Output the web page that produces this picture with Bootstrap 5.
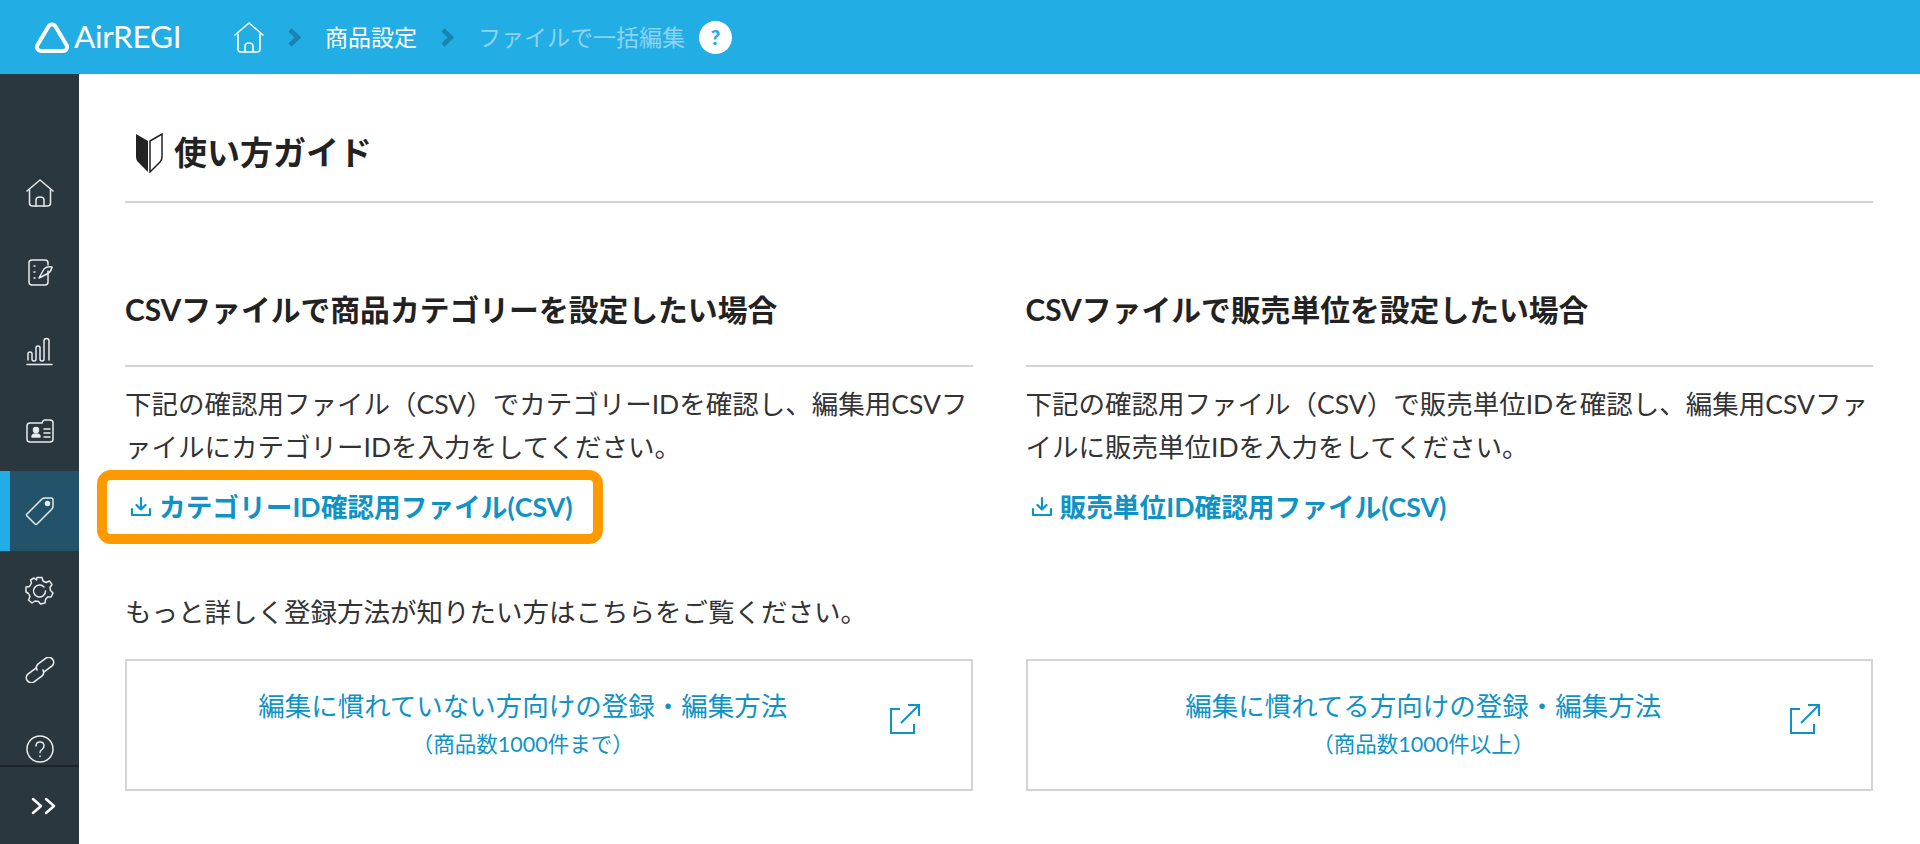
<!DOCTYPE html>
<html lang="ja">
<head>
    <meta charset="UTF-8">
    <meta name="viewport" content="width=device-width, initial-scale=1.0">
    <title>使い方ガイド</title>
    <link rel="stylesheet" href="https://cdn.jsdelivr.net/npm/bootstrap@5.3.0/dist/css/bootstrap.min.css">
    <style>
        html, body {
            height: 100%;
            overflow: hidden;
        }
        body {
            font-family: Lato, "Noto Sans CJK JP", sans-serif;
            color: #333;
            background: #fff;
        }
        .app-header {
            height: 74px;
            background: #22aee5;
            color: #fff;
            padding-left: 34px;
        }
        .air-logo {
            font-size: 31.5px;
            font-weight: 400;
            letter-spacing: -.3px;
            width: 200px;
            gap: 4px;
        }
        .crumb-text {
            font-size: 23px;
            line-height: 1;
        }
        .crumb-dim {
            color: #8fd3f0;
        }
        .crumb-sep {
            margin: 0 24px;
        }
        .crumb-help {
            width: 33px;
            height: 33px;
            background: #fff;
            color: #22aee5;
            font-size: 21px;
            font-weight: 900;
            margin-left: 14px;
        }
        .app-body {
            height: 770px;
        }
        .side-nav {
            width: 79px;
            background: #2b373e;
            flex-shrink: 0;
        }
        .side-list {
            padding-top: 79px;
            height: 691px;
            overflow: hidden;
        }
        .side-item {
            height: 79.5px;
        }
        .side-item.is-active {
            background: #22536a;
            border-left: 10px solid #22aee5;
            padding-right: 10px;
        }
        .side-toggle {
            height: 79px;
            border-top: 2px solid #1d2428;
            padding-left: 8px;
        }
        .main-area {
            padding: 0 47px 0 46px;
        }
        .guide-head {
            height: 129px;
            border-bottom: 2px solid #d4d4d4;
            padding: 59px 0 0 10px;
            gap: 11px;
        }
        .guide-title {
            font-size: 33px;
            font-weight: 700;
            line-height: 1;
            margin: 3px 0 0;
            color: #222;
        }
        .col-wrap {
            --bs-gutter-x: 53px;
        }
        .col-title {
            font-size: 29.8px;
            font-weight: 700;
            line-height: 1;
            padding-top: 92px;
            height: 164px;
            margin: 0;
            border-bottom: 2px solid #d4d4d4;
            color: #222;
        }
        .col-text {
            font-size: 26.5px;
            line-height: 43px;
            margin: 16px 0 0;
        }
        .dl-wrap {
            height: 74px;
            margin: 1px 0 0 -28px;
            padding-left: 33px;
            width: 506px;
            border-radius: 14px;
        }
        .dl-wrap.is-marked {
            border: 10px solid #ff9900;
            padding-left: 23px;
        }
        .dl-link {
            color: #0f93c7;
            font-size: 26.7px;
            font-weight: 700;
            text-decoration: none;
            gap: 7px;
            line-height: 1;
        }
        .more-text {
            font-size: 26.5px;
            line-height: 1;
            margin: 55px 0 0;
        }
        .ext-box {
            height: 132px;
            margin-top: 33px;
            border: 2px solid #d4d4d4;
            color: #0f93c7;
            text-decoration: none;
            padding: 0 52px 0 0;
        }
        .ext-main {
            font-size: 26.5px;
            line-height: 38px;
        }
        .ext-sub {
            font-size: 21.5px;
            line-height: 38px;
        }
        .ext-icon {
            right: 51px;
            top: 43px;
        }
    </style>
</head>
<body>
    <header class="app-header d-flex align-items-center">
        <div class="air-logo d-flex align-items-center">
            <svg width="36" height="32" viewBox="0 0 36 32" fill="none" stroke="#fff" stroke-width="4" stroke-linejoin="round"><path d="M14.500 5.500A4 4 0 0 1 21.500 5.500L32.500 24A4 4 0 0 1 29 30H7A4 4 0 0 1 3.500 24Z"/></svg>
            <span>AirREGI</span>
        </div>
        <svg width="30" height="31" viewBox="0 0 30 31" fill="none" stroke="#fff" stroke-width="1.600" stroke-linecap="round" stroke-linejoin="round"><path d="M1 13 15 1 29 13"/><path d="M4 12V27Q4 30 7 30H23Q26 30 26 27V12"/><path d="M11 30V24Q11 21 15 21T19 24V30"/></svg>
        <svg class="crumb-sep" width="13" height="19" viewBox="0 0 13 19" fill="none" stroke="#1a84b1" stroke-width="4.500"><path d="M2 2 10 9.500 2 17"/></svg>
        <span class="crumb-text">商品設定</span>
        <svg class="crumb-sep" width="13" height="19" viewBox="0 0 13 19" fill="none" stroke="#1a84b1" stroke-width="4.500"><path d="M2 2 10 9.500 2 17"/></svg>
        <span class="crumb-text crumb-dim">ファイルで一括編集</span>
        <span class="crumb-help rounded-circle d-flex align-items-center justify-content-center">?</span>
    </header>

    <div class="app-body d-flex">
        <nav class="side-nav">
            <div class="side-list">
                <div class="side-item d-flex align-items-center justify-content-center">
                    <svg width="28" height="28" viewBox="0 0 28 28" fill="none" stroke="#e8ecee" stroke-width="1.500" stroke-linecap="round" stroke-linejoin="round"><path d="M1 12 14 1 27 12"/><path d="M3.500 11V24Q3.500 27 6.500 27H21.500Q24.500 27 24.500 24V11"/><path d="M10 27V21Q10 18 14 18T18 21V27"/></svg>
                </div>
                <div class="side-item d-flex align-items-center justify-content-center">
                    <svg width="26" height="27" viewBox="0 0 26 27" fill="none" stroke="#e8ecee" stroke-width="1.500" stroke-linecap="round" stroke-linejoin="round"><path d="M21 12V23Q21 26 18 26H5Q2 26 2 23V4Q2 1 5 1H18Q21 1 21 4V6"/><path d="M7 7H8M7 13H8M7 19H8"/><path d="M12 19 17 10Q20 7 25 8 24 13 20 15Z"/></svg>
                </div>
                <div class="side-item d-flex align-items-center justify-content-center">
                    <svg width="27" height="29" viewBox="0 0 27 29" fill="none" stroke="#e8ecee" stroke-width="1.500" stroke-linecap="round" stroke-linejoin="round"><path d="M1 27.500H26"/><path d="M2 23V17Q2 15 4 15T6 17V22Q6 24 8 24T10 22V11Q10 9 12 9T14 11V22Q14 24 16 24T18 22V4Q18 1.500 20.500 1.500T23 4V23"/></svg>
                </div>
                <div class="side-item d-flex align-items-center justify-content-center">
                    <svg width="28" height="24" viewBox="0 0 28 24" fill="none" stroke="#e8ecee" stroke-width="1.500" stroke-linecap="round" stroke-linejoin="round"><path d="M4 4H16Q17 1 19 1H24Q27 1 27 4V20Q27 23 24 23H4Q1 23 1 20V7Q1 4 4 4Z"/><path d="M18 10H24M18 14H24M18 18H24"/><circle cx="10" cy="11" r="2.500" fill="#e8ecee"/><path d="M6 18Q6 15 10 15T14 18Z" fill="#e8ecee"/></svg>
                </div>
                <div class="side-item is-active d-flex align-items-center justify-content-center">
                    <svg width="30" height="30" viewBox="0 0 30 30" fill="none" stroke="#e8ecee" stroke-width="1.500" stroke-linecap="round" stroke-linejoin="round"><path d="M2 18 17 3Q18 2 20 2H26Q28 2 28 4V10Q28 12 27 13L12 28Q11 29 10 28L2 20Q1 19 2 18Z"/><circle cx="22.500" cy="7.500" r="2" fill="#e8ecee"/></svg>
                </div>
                <div class="side-item d-flex align-items-center justify-content-center">
                    <svg width="29" height="29" viewBox="0 0 29 29" fill="none" stroke="#e8ecee" stroke-width="1.500" stroke-linecap="round" stroke-linejoin="round"><path d="M12 1.500H17L18 5 21 6.500 24.500 5 27 8.500 25 11.500 25.500 14.500 28 17 26 21 22.500 21 20.500 23.500 20 27 15.500 28 13.500 25.500 10 25 7 27 3.500 24 5 20.500 3.500 17.500 1 16V11L4.500 10.500 6.500 7 5.500 4 9 2 11.500 4Z"/><path d="M19 11A6 6 0 1 0 20.500 15"/></svg>
                </div>
                <div class="side-item d-flex align-items-center justify-content-center">
                    <svg width="32" height="26" viewBox="0 0 32 26" fill="none" stroke="#e8ecee" stroke-width="1.600" stroke-linecap="round" stroke-linejoin="round"><path d="M11.900 11.100 3.900 17.100A5 5 0 0 0 10.100 24.900L18.100 18.900A5 5 0 0 0 19 13"/><path d="M20.100 14.900 28.100 8.900A5 5 0 0 0 21.900 1.100L13.900 7.100A5 5 0 0 0 13 13"/></svg>
                </div>
                <div class="side-item d-flex align-items-center justify-content-center">
                    <svg width="28" height="28" viewBox="0 0 28 28" fill="none" stroke="#e8ecee" stroke-width="1.500" stroke-linecap="round" stroke-linejoin="round"><circle cx="14" cy="14" r="13"/><path d="M10 11Q10 7 14 7T18 11Q18 13 16 14.500T14 17.500"/><path d="M14 21V21.500"/></svg>
                </div>
            </div>
            <div class="side-toggle d-flex align-items-center justify-content-center">
                <svg width="25" height="18" viewBox="0 0 25 18" fill="none" stroke="#fff" stroke-width="2.500" stroke-linecap="round" stroke-linejoin="round"><path d="M2 2 10 9 2 16"/><path d="M15 2 23 9 15 16"/></svg>
            </div>
        </nav>

        <main class="main-area flex-grow-1">
            <div class="guide-head d-flex align-items-start">
                <svg width="28" height="40" viewBox="0 0 28 40" fill="#222"><path d="M1 1 13 8V39L3 29Q1 27 1 24Z"/><path d="M15 8 27 1V24Q27 27 25 29L15 39Z" fill="none" stroke="#222" stroke-width="1.500"/></svg>
                <h1 class="guide-title">使い方ガイド</h1>
            </div>

            <div class="row col-wrap">
                <section class="col-6">
                    <h2 class="col-title">CSVファイルで商品カテゴリーを設定したい場合</h2>
                    <p class="col-text">下記の確認用ファイル（CSV）でカテゴリーIDを確認し、編集用CSVファイルにカテゴリーIDを入力をしてください。</p>
                    <div class="dl-wrap is-marked d-flex align-items-center">
                        <a href="#" class="dl-link d-flex align-items-center">
                            <svg width="22" height="22" viewBox="0 0 22 22" fill="none" stroke="#0f93c7" stroke-width="2.200" stroke-linecap="round" stroke-linejoin="round"><path d="M11 2V13M6.500 9 11 13.500 15.500 9"/><path d="M2 13V19H20V13"/></svg>
                            <span>カテゴリーID確認用ファイル(CSV)</span>
                        </a>
                    </div>
                    <p class="more-text">もっと詳しく登録方法が知りたい方はこちらをご覧ください。</p>
                    <a href="#" class="ext-box position-relative d-flex flex-column align-items-center justify-content-center">
                        <span class="ext-main">編集に慣れていない方向けの登録・編集方法</span>
                        <span class="ext-sub">（商品数1000件まで）</span>
                        <svg class="ext-icon position-absolute" width="30" height="30" viewBox="0 0 30 30" fill="none" stroke="#0f93c7" stroke-width="2"><path d="M10 5H1V29H24V20"/><path d="M11 19 29 1M18 1H29V12"/></svg>
                    </a>
                </section>
                <section class="col-6">
                    <h2 class="col-title">CSVファイルで販売単位を設定したい場合</h2>
                    <p class="col-text">下記の確認用ファイル（CSV）で販売単位IDを確認し、編集用CSVファイルに販売単位IDを入力をしてください。</p>
                    <div class="dl-wrap d-flex align-items-center">
                        <a href="#" class="dl-link d-flex align-items-center">
                            <svg width="22" height="22" viewBox="0 0 22 22" fill="none" stroke="#0f93c7" stroke-width="2.200" stroke-linecap="round" stroke-linejoin="round"><path d="M11 2V13M6.500 9 11 13.500 15.500 9"/><path d="M2 13V19H20V13"/></svg>
                            <span>販売単位ID確認用ファイル(CSV)</span>
                        </a>
                    </div>
                    <p class="more-text">&nbsp;</p>
                    <a href="#" class="ext-box position-relative d-flex flex-column align-items-center justify-content-center">
                        <span class="ext-main">編集に慣れてる方向けの登録・編集方法</span>
                        <span class="ext-sub">（商品数1000件以上）</span>
                        <svg class="ext-icon position-absolute" width="30" height="30" viewBox="0 0 30 30" fill="none" stroke="#0f93c7" stroke-width="2"><path d="M10 5H1V29H24V20"/><path d="M11 19 29 1M18 1H29V12"/></svg>
                    </a>
                </section>
            </div>
        </main>
    </div>

    <script src="https://cdn.jsdelivr.net/npm/bootstrap@5.3.0/dist/js/bootstrap.bundle.min.js"></script>
</body>
</html>
